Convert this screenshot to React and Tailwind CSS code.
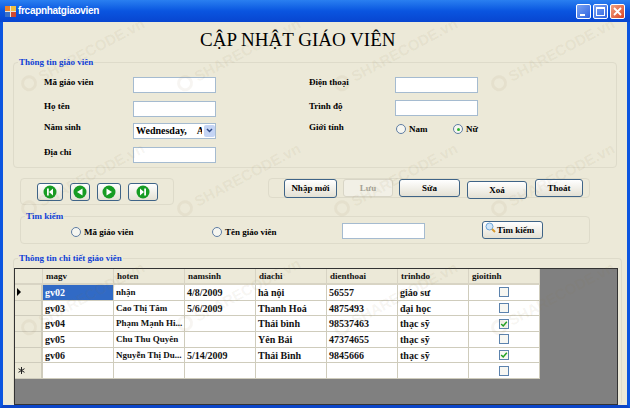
import { Fragment } from "react"

const serif = "font-['Liberation_Serif',serif] font-bold"

function Group({ legend, className, children }) {
  return (
    <div className={`relative rounded border border-[#dedbca] ${className}`}>
      {legend && (
        <span className="absolute -top-[6px] left-[4px] bg-[#ece9d8] px-px text-[9px] leading-[11px] text-[#0f3fd6]">
          {legend}
        </span>
      )}
      {children}
    </div>
  )
}

function Input({ className = "" }) {
  return <div className={`h-4 w-[83px] border border-[#a5bbd0] bg-white ${className}`} />
}

function Radio({ checked }) {
  return (
    <span className="flex size-[10px] shrink-0 items-center justify-center rounded-full border border-[#5f7da3] bg-[#f6f6f0]">
      {checked && <span className="size-[3px] rounded-full bg-[#2fb52f]" />}
    </span>
  )
}

function Btn({ className = "", children }) {
  return (
    <div className={`flex items-center justify-center rounded-[3px] border border-[#3f6487] bg-gradient-to-b from-white to-[#e4e1d4] text-[9px] leading-[11px] text-black ${className}`}>
      {children}
    </div>
  )
}

function NavIcon({ kind }) {
  return (
    <svg width="14" height="14" viewBox="0 0 14 14">
      <circle cx="7" cy="7" r="6.5" fill="#169c23" />
      {kind === "prev" && <path d="M9.5 3.5v7L4 7z" fill="#fff" />}
      {kind === "next" && <path d="M4.5 3.5v7L10 7z" fill="#fff" />}
      {kind === "first" && <path d="M4 3.5h1.8v7H4zM10 3.5v7L6 7z" fill="#fff" />}
      {kind === "last" && <path d="M8.2 3.5H10v7H8.2zM4 3.5v7L8 7z" fill="#fff" />}
    </svg>
  )
}

function Check({ on }) {
  return (
    <span className="flex size-[10px] items-center justify-center border border-[#5c83ad] bg-[#f7f7f2]">
      {on && (
        <svg width="8" height="8" viewBox="0 0 8 8">
          <path d="M1.2 4l2 2 3.6-4.2" fill="none" stroke="#21a121" strokeWidth="1.5" />
        </svg>
      )}
    </span>
  )
}

const columns = ["magv", "hoten", "namsinh", "diachi", "dienthoai", "trinhdo", "gioitinh"]
const rows = [
  ["gv02", "nhận", "4/8/2009", "hà nội", "56557", "giáo sư", false],
  ["gv03", "Cao Thị Tâm", "5/6/2009", "Thanh Hoá", "4875493", "đại học", false],
  ["gv04", "Phạm Mạnh Hi...", "", "Thái bình", "98537463", "thạc sỹ", true],
  ["gv05", "Chu Thu Quyên", "", "Yên Bái", "47374655", "thạc sỹ", false],
  ["gv06", "Nguyễn Thị Du...", "5/14/2009", "Thái Bình", "9845666", "thạc sỹ", true],
  ["", "", "", "", "", "", false],
]

function Grid() {
  return (
    <div className="mt-[3px] h-[137px] w-[604px] border border-[#333] bg-[#808080] text-[#111]">
      <div className="grid w-[525px] grid-cols-[28px_repeat(7,71px)] bg-[#ece9d8]">
        <div className="h-4 border-r border-b-2 border-[#d8d4c4]" />
        {columns.map((c) => (
          <div key={c} className="flex h-4 items-center border-r border-b-2 border-[#d8d4c4] pl-[3px] text-[9px] leading-[11px]">{c}</div>
        ))}
        {rows.map((r, i) => (
          <Fragment key={i}>
            <div className="flex h-[15.7px] items-center justify-center border-r-2 border-b border-[#cfccbc] bg-[#ece9d8]">
              {i === 0 && <span className="mr-[18px] h-0 w-0 border-y-[4px] border-l-[4px] border-y-transparent border-l-black" />}
              {i === 5 && (
                <svg width="7" height="7" viewBox="0 0 7 7" className="mr-[13px]">
                  <path d="M3.5 0v7M0.5 1.7l6 3.6M6.5 1.7l-6 3.6" stroke="#222" strokeWidth="1" />
                </svg>
              )}
            </div>
            {r.slice(0, 6).map((v, j) => (
              <div
                key={j}
                className={`flex h-[15.7px] items-center overflow-hidden leading-[11px] whitespace-nowrap border-r border-b border-[#cfccbc] pl-[2px] ${j === 1 ? "text-[9px]" : "text-[10px]"} ${i === 0 && j === 0 ? "bg-[#316ac5] text-white" : "bg-white"}`}
              >
                {v}
              </div>
            ))}
            <div className="flex h-[15.7px] items-center justify-center border-r border-b border-[#cfccbc] bg-white">
              <Check on={r[6]} />
            </div>
          </Fragment>
        ))}
      </div>
    </div>
  )
}

const marks = [
  "left-[22px] top-[78px]", "left-[178px] top-[78px]", "left-[335px] top-[78px]", "left-[492px] top-[78px]",
  "left-[22px] top-[203px]", "left-[178px] top-[203px]", "left-[335px] top-[203px]", "left-[492px] top-[203px]",
  "left-[22px] top-[322px]", "left-[178px] top-[318px]", "left-[335px] top-[322px]", "left-[492px] top-[322px]",
]

function Watermarks() {
  return (
    <>
      {marks.map((s) => (
        <div key={s} className={`pointer-events-none absolute flex origin-left -rotate-[28deg] items-center gap-[4px] font-['Liberation_Sans',sans-serif] text-[15px] leading-[18px] font-bold text-[#8a7440]/[0.08] ${s}`}>
          <span className="size-[16px] rounded-full border-[3px] border-[#8a7440]/[0.07]" />
          <span>SHARECODE.vn</span>
        </div>
      ))}
    </>
  )
}

export default function App() {
  return (
    <div className={`relative flex h-[408px] w-[630px] flex-col overflow-hidden ${serif}`}>
      <div className="flex h-[22px] shrink-0 items-center bg-gradient-to-b from-[#2a7ff0] via-[#0a55e0] to-[#0845d0] pr-[5px] pl-[5px]">
        <svg width="11" height="11" viewBox="0 0 11 11" className="shrink-0">
          <rect width="11" height="11" fill="#e8e4d8" />
          <rect x="0" y="0" width="5" height="5" fill="#e8802a" />
          <rect x="6" y="0" width="5" height="5" fill="#f0c040" />
          <rect x="0" y="6" width="5" height="5" fill="#3a70c8" />
          <rect x="6" y="6" width="5" height="5" fill="#d04a30" />
        </svg>
        <span className="ml-[2px] font-['Liberation_Sans',sans-serif] text-[10px] leading-[12px] font-bold tracking-[-0.3px] text-white">frcapnhatgiaovien</span>
        <div className="ml-auto flex gap-[2px]">
          <div className="flex size-[15px] items-end justify-start rounded-[2px] border border-white bg-gradient-to-br from-[#7aa2f2] to-[#2f62e0] pb-[2px] pl-[3px]">
            <span className="h-[2px] w-[5px] bg-white" />
          </div>
          <div className="flex size-[15px] items-center justify-center rounded-[2px] border border-white bg-gradient-to-br from-[#7aa2f2] to-[#2f62e0]">
            <span className="size-[9px] border border-t-2 border-white" />
          </div>
          <div className="flex size-[15px] items-center justify-center rounded-[2px] border border-white bg-gradient-to-br from-[#f0a080] to-[#d84020]">
            <svg width="9" height="9" viewBox="0 0 9 9"><path d="M1 1l7 7M8 1L1 8" stroke="#fff" strokeWidth="1.8" /></svg>
          </div>
        </div>
      </div>

      <div className="flex min-h-0 flex-1 flex-col border-x-[3px] border-b-[3px] border-x-[#0b55e0] border-b-[#0b45c8] bg-[#ece9d8] pr-[10px] pl-[10px]">
        <h1 className="mt-[6px] pl-[187px] text-[19px] leading-[24px] font-normal whitespace-nowrap text-black">CẬP NHẬT GIÁO VIÊN</h1>

        <Group legend="Thông tin giáo viên" className="mt-[10px] h-[106px] w-[604px] shrink-0 text-[9px] text-black">
          <div className="flex pt-[14px] pl-[30px]">
            <div className="grid w-[265px] grid-cols-[89px_83px] items-center">
              <span className="h-[24px] leading-[11px]">Mã giáo viên</span><Input className="-mt-[8px]" />
              <span className="h-[21px] leading-[11px]">Họ tên</span><Input className="-mt-[6px]" />
              <span className="h-[25px] leading-[11px]">Năm sinh</span>
              <div className="-mt-[8px] flex h-4 w-[83px] items-center border border-[#a5bbd0] bg-white pl-[2px] text-[10px] whitespace-nowrap">
                <span className="w-[66px] overflow-hidden leading-[12px]">Wednesday,&nbsp;&nbsp;&nbsp;&nbsp;Ap</span>
                <span className="ml-auto flex h-[12px] w-[11px] items-center justify-center rounded-[2px] bg-[#c4d4f4]">
                  <svg width="7" height="5" viewBox="0 0 7 5"><path d="M1 1l2.5 2.5L6 1" fill="none" stroke="#334d8a" strokeWidth="1.5" /></svg>
                </span>
              </div>
              <span className="h-[16px] leading-[11px]">Địa chỉ</span><Input className="-mt-[1px]" />
            </div>
            <div className="grid grid-cols-[86px_83px] content-start items-center">
              <span className="h-[24px] leading-[11px]">Điện thoại</span><Input className="-mt-[8px]" />
              <span className="h-[21px] leading-[11px]">Trình độ</span><Input className="-mt-[8px]" />
              <span className="h-[25px] leading-[11px]">Giới tính</span>
              <div className="-mt-[11px] flex h-[12px] items-center pl-px leading-[11px] whitespace-nowrap">
                <Radio /><span className="ml-[3px] w-[48px]">Nam</span>
                <Radio checked /><span className="ml-[3px]">Nữ</span>
              </div>
            </div>
          </div>
        </Group>

        <div className="mt-[10px] flex shrink-0 items-start">
          <Group className="ml-[7px] flex h-[27px] w-[154px] items-center gap-[7px] pl-[16px]">
            <Btn className="h-[18px] w-[26px]"><NavIcon kind="first" /></Btn>
            <Btn className="h-[18px] w-[20px]"><NavIcon kind="prev" /></Btn>
            <Btn className="h-[18px] w-[24px]"><NavIcon kind="next" /></Btn>
            <Btn className="h-[18px] w-[30px]"><NavIcon kind="last" /></Btn>
          </Group>
          <Group className="ml-[94px] flex h-[20px] w-[322px] items-start pl-[15px]">
            <Btn className="h-[19px] w-[53px]">Nhập mới</Btn>
            <div className="ml-[6px] flex h-[18px] w-[50px] items-center justify-center rounded-[3px] border border-[#d8d5c6] bg-[#f2f0e6] text-[9px] leading-[11px] text-[#a5a396]">Lưu</div>
            <Btn className="ml-[6px] h-[18px] w-[61px]">Sửa</Btn>
            <Btn className="mt-[2px] ml-[7px] h-[18px] w-[60px]">Xoá</Btn>
            <Btn className="ml-[8px] h-[18px] w-[48px]">Thoát</Btn>
          </Group>
        </div>

        <Group legend="Tìm kiếm" className="mt-[11px] ml-[7px] flex h-[28px] w-[570px] shrink-0 items-start text-[9px] leading-[11px] text-black">
          <div className="mt-[9px] ml-[50px] flex h-[12px] w-[141px] items-center gap-[3px]"><Radio /><span>Mã giáo viên</span></div>
          <div className="mt-[9px] flex h-[12px] w-[130px] items-center gap-[3px]"><Radio /><span>Tên giáo viên</span></div>
          <Input className="mt-[6px]" />
          <Btn className="relative mt-[4px] ml-[57px] h-[18px] w-[61px] pl-[6px] text-[9px]">
            <svg width="11" height="11" viewBox="0 0 11 11" className="absolute top-0 left-[2px]">
              <circle cx="4.5" cy="4.5" r="3.5" fill="#cfe6fa" stroke="#6fa6d8" />
              <path d="M7 7l3 3" stroke="#d89a30" strokeWidth="2" />
            </svg>
            Tìm kiếm
          </Btn>
        </Group>

        <Group legend="Thông tin chi tiết giáo viên" className="mt-[14px] min-h-0 w-[609px] flex-1 border-b-0">
          <div className="pt-[6px]"><Grid /></div>
        </Group>
      </div>
      <Watermarks />
    </div>
  )
}
